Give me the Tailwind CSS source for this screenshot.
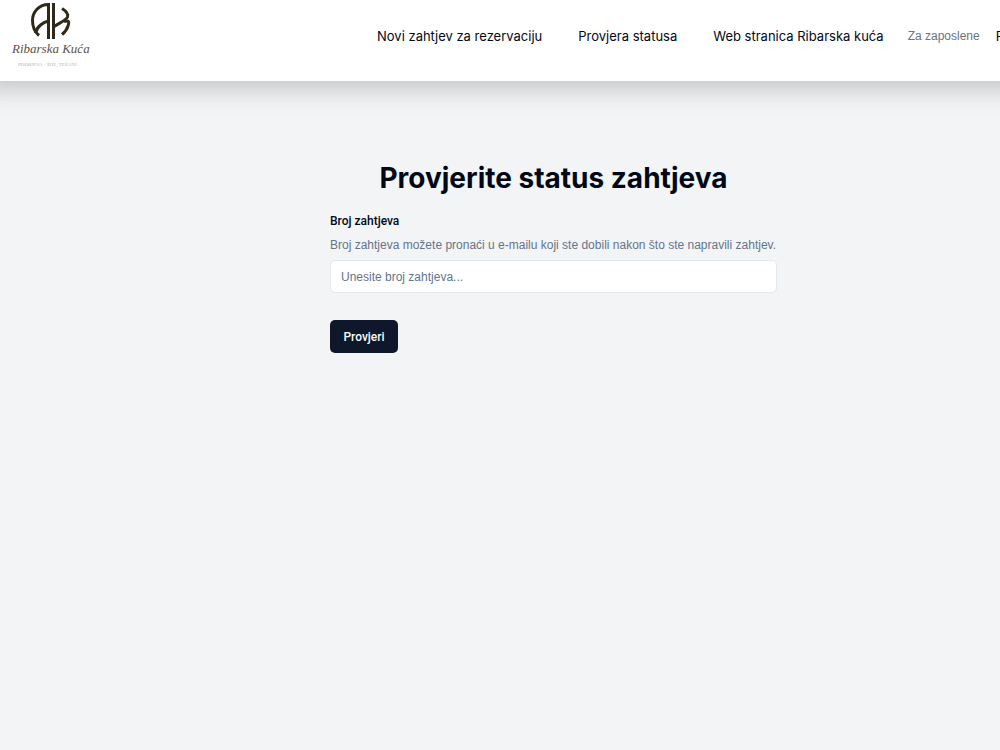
<!DOCTYPE html>
<html lang="hr">
<head>
  <meta charset="UTF-8" />
  <meta name="viewport" content="width=device-width, initial-scale=1.0"/>
  <title>Ribarska kuća</title>
  <script src="https://cdn.jsdelivr.net/npm/@tailwindcss/browser@4"></script>
</head>
<body class="bg-[#f3f4f6] min-h-screen overflow-x-hidden font-['Liberation_Sans',sans-serif] text-[#020817]">

  <div class="min-w-[1107px]">
    <!-- Header -->
    <header class="flex h-[81px] items-start bg-white shadow-[0_-12px_24px_20px_rgba(0,0,0,0.2)]">
      <a href="#" aria-label="Ribarska kuća" class="ml-2 mr-[284px] shrink-0">
        <svg class="h-[72px] w-[85px]" viewBox="0 0 85 72">
          <g fill="none" stroke="#30291a" stroke-width="3">
            <path d="M40.500 39V4.500C31 4.500 24.500 12 24.500 20.500C24.500 27 27 32 31 35.500" />
            <path d="M40.500 21C36 22 29 26 27.500 33" />
            <path d="M45.500 3V39" />
            <path d="M54 8.500C58 11 60.500 14 59.500 17C58 20.500 51 23 45.500 27" />
            <path d="M56 21.500C61 20 61.500 22 60 26C59 29.500 57 32 54 34.500" />
          </g>
          <text x="4" y="53" font-family="Liberation Serif, serif" font-style="italic" font-size="13" fill="#5a5346">Ribarska Kuća</text>
          <text x="10" y="66" font-family="Liberation Serif, serif" font-size="5" fill="#b5b3ae">PODRJEVA - ŠIJE, TEŠANJ</text>
        </svg>
      </a>
      <nav class="flex items-center pt-6 text-[13px] leading-6 whitespace-nowrap font-['Inter',sans-serif]">
        <a href="#">Novi zahtjev za rezervaciju</a>
        <a href="#" class="ml-9">Provjera statusa</a>
        <a href="#" class="ml-9">Web stranica Ribarska kuća</a>
        <a href="#" class="ml-6 text-[12px] text-[#6b7280] font-['Liberation_Sans',sans-serif]">Za zaposlene</a>
        <a href="#" class="ml-4">P</a>
      </nav>
    </header>

    <!-- Status form -->
    <main class="flex flex-col items-center pt-[79px]">
      <div class="w-[447px]">
        <h1 class="text-center text-[28px] leading-9 font-bold font-['Inter',sans-serif]">Provjerite status zahtjeva</h1>
        <form class="mt-[15px]">
          <label for="requestNumber" class="block text-[12px] leading-5 font-medium font-['Roboto',sans-serif]">Broj zahtjeva</label>
          <p id="requestHint" class="mt-1 text-[12px] leading-5 whitespace-nowrap text-[#64748b]">Broj zahtjeva možete pronaći u e-mailu koji ste dobili nakon što ste napravili zahtjev.</p>
          <input id="requestNumber" type="text" aria-describedby="requestHint" placeholder="Unesite broj zahtjeva..." class="mt-[5px] block h-[33px] w-full rounded-[5px] border border-[#e2e8f0] bg-white px-[10px] text-[12px] placeholder:text-[#64748b]" />
          <button type="submit" class="mt-[27px] block h-[33px] w-[68px] rounded-[5px] bg-[#0f172a] text-center text-[12px] font-medium text-[#f8fafc] font-['Roboto',sans-serif]">Provjeri</button>
        </form>
      </div>
    </main>
  </div>

</body>
</html>
